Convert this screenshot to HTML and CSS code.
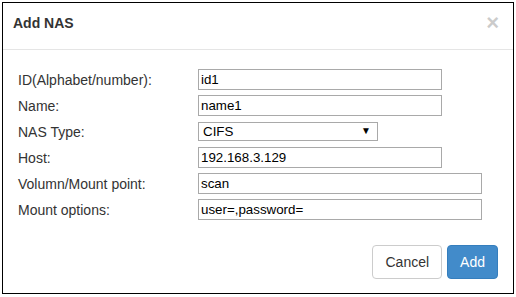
FILE: index.html
```html
<!DOCTYPE html>
<html lang="en">
<head>
    <meta charset="UTF-8">
    <meta name="viewport" content="width=device-width, initial-scale=1.0">
    <title>Add NAS</title>
    <link rel="stylesheet" href="styles.css">
</head>
<body>
    <div class="modal">
        <div class="modal-header">
            <h4 class="modal-title">Add NAS</h4>
            <button class="close" type="button">&times;</button>
        </div>

        <div class="modal-body">
            <div class="form-row">
                <label for="nasId">ID(Alphabet/number):</label>
                <input type="text" id="nasId" class="field" value="id1">
            </div>
            <div class="form-row">
                <label for="nasName">Name:</label>
                <input type="text" id="nasName" class="field" value="name1">
            </div>
            <div class="form-row">
                <label for="nasType">NAS Type:</label>
                <div class="select-wrap">
                    <select id="nasType" class="field-select">
                        <option>CIFS</option>
                        <option>NFS</option>
                    </select>
                    <span class="select-arrow">&#9660;</span>
                </div>
            </div>
            <div class="form-row">
                <label for="nasHost">Host:</label>
                <input type="text" id="nasHost" class="field" value="192.168.3.129">
            </div>
            <div class="form-row">
                <label for="nasMount">Volumn/Mount point:</label>
                <input type="text" id="nasMount" class="field field-wide" value="scan">
            </div>
            <div class="form-row">
                <label for="nasOptions">Mount options:</label>
                <input type="text" id="nasOptions" class="field field-wide" value="user=,password=">
            </div>
        </div>

        <div class="modal-footer">
            <button class="btn btn-default" type="button">Cancel</button>
            <button class="btn btn-primary" type="button">Add</button>
        </div>
    </div>
</body>
</html>
```

FILE: styles.css
```css
body {
    margin: 2px;
    font-family: "Liberation Sans", Arial, sans-serif;
    font-size: 14px;
    color: #333;
    background-color: #fff;
}

.modal {
    width: 512px;
    box-sizing: border-box;
    border: 1px solid #000;
    background-color: #fff;
}

.modal-header {
    display: flex;
    justify-content: space-between;
    align-items: flex-start;
    padding: 10px 14px 16px 10px;
    border-bottom: 1px solid #e5e5e5;
}

.modal-title {
    margin: 0;
    font-size: 14px;
    line-height: 20px;
    font-weight: bold;
    color: #333;
}

.close {
    padding: 0;
    border: none;
    background: none;
    font-family: "Liberation Sans", Arial, sans-serif;
    font-size: 22px;
    line-height: 20px;
    font-weight: bold;
    color: #000;
    opacity: 0.2;
    cursor: pointer;
}

.modal-body {
    display: flex;
    flex-direction: column;
    gap: 5px;
    padding: 19px 15px 0 15px;
}

.form-row {
    display: flex;
    align-items: center;
    height: 21px;
}

.form-row label {
    width: 180px;
    flex-shrink: 0;
    line-height: 20px;
}

.field {
    width: 244px;
    height: 21px;
    box-sizing: border-box;
    margin: 0;
    padding: 1px 2px;
    border: 1px solid #a9a9a9;
    font-family: "Liberation Sans", Arial, sans-serif;
    font-size: 13.33px;
    color: #000;
}

.field-wide {
    width: 284px;
}

.select-wrap {
    position: relative;
    width: 180px;
    height: 19px;
}

.field-select {
    appearance: none;
    -webkit-appearance: none;
    width: 100%;
    height: 19px;
    box-sizing: border-box;
    margin: 0;
    padding: 0 4px;
    border: 1px solid #a9a9a9;
    border-radius: 0;
    background-color: #fff;
    font-family: "Liberation Sans", Arial, sans-serif;
    font-size: 13.33px;
    color: #000;
}

.select-arrow {
    position: absolute;
    right: 7px;
    top: 4px;
    font-size: 10px;
    line-height: 10px;
    color: #000;
    pointer-events: none;
}

.modal-footer {
    display: flex;
    justify-content: flex-end;
    gap: 5px;
    padding: 25px 15px 14px 15px;
}

.btn {
    height: 34px;
    padding: 6px 12px;
    border: 1px solid transparent;
    border-radius: 4px;
    font-family: "Liberation Sans", Arial, sans-serif;
    font-size: 14px;
    line-height: 20px;
    cursor: pointer;
}

.btn-default {
    background-color: #fff;
    border-color: #ccc;
    color: #333;
}

.btn-primary {
    background-color: #428bca;
    border-color: #357ebd;
    color: #fff;
}
```
